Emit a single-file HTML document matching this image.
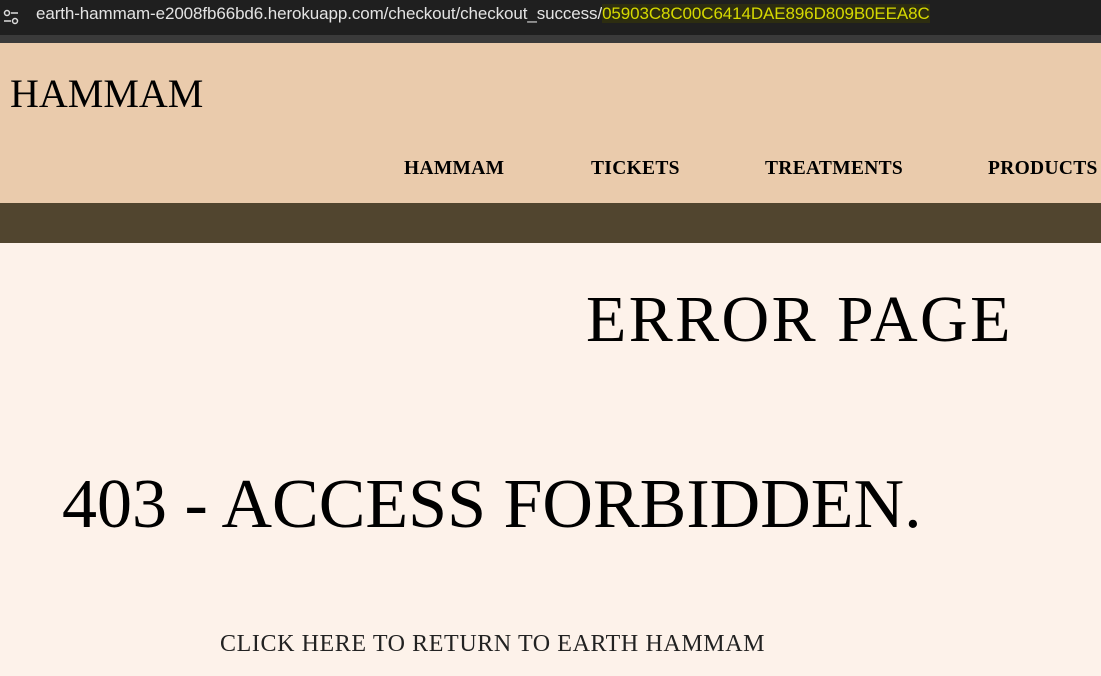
<!DOCTYPE html>
<html><head><style>
body{margin:0;width:1101px;height:676px;overflow:hidden;background:#fdf2ea;font-family:"Liberation Serif",serif;position:relative}
.bar{position:absolute;left:0;top:0;width:1101px;height:35px;background:#1f1f1f}
.bar2{position:absolute;left:0;top:35px;width:1101px;height:8px;background:#3a3a3a}
.url{position:absolute;left:36px;top:4px;font-family:"Liberation Sans",sans-serif;font-size:17px;color:#e3e3e3;white-space:nowrap;letter-spacing:-0.1px}
.url span{color:#d6d900;background:#2d2d10}
.hdr{position:absolute;left:0;top:43px;width:1101px;height:160px;background:#eacbac}
.brown{position:absolute;left:0;top:203px;width:1101px;height:40px;background:#51452f}
.t{position:absolute;white-space:nowrap;color:#000}
</style></head><body>
<div class="bar"></div><div class="bar2"></div>
<svg style="position:absolute;left:2px;top:8px" width="18" height="18"><circle cx="5" cy="5" r="2.5" fill="none" stroke="#ddd" stroke-width="1.5"/><line x1="9" y1="5" x2="16" y2="5" stroke="#ddd" stroke-width="1.5"/><line x1="2" y1="13" x2="9" y2="13" stroke="#ddd" stroke-width="1.5"/><circle cx="13" cy="13" r="2.5" fill="none" stroke="#ddd" stroke-width="1.5"/></svg>
<div class="url">earth-hammam-e2008fb66bd6.herokuapp.com/checkout/checkout_success/<span>05903C8C00C6414DAE896D809B0EEA8C</span></div>
<div class="hdr"></div><div class="brown"></div>
<div class="t" style="left:10px;top:70px;font-size:40px">HAMMAM</div>
<div class="t" style="left:404px;top:158px;font-size:19.5px;font-weight:bold;letter-spacing:0.3px">HAMMAM</div>
<div class="t" style="left:591px;top:158px;font-size:19.5px;font-weight:bold;letter-spacing:0.3px">TICKETS</div>
<div class="t" style="left:765px;top:158px;font-size:19.5px;font-weight:bold;letter-spacing:0.3px">TREATMENTS</div>
<div class="t" style="left:988px;top:158px;font-size:19.5px;font-weight:bold;letter-spacing:0.3px">PRODUCTS</div>
<div class="t" style="left:586px;top:282px;font-size:66px;letter-spacing:2.4px">ERROR PAGE</div>
<div class="t" style="left:62px;top:465px;font-size:70px">403 - ACCESS FORBIDDEN.</div>
<div class="t" style="left:220px;top:631px;font-size:24px;color:#222;letter-spacing:0.6px">CLICK HERE TO RETURN TO EARTH HAMMAM</div>
</body></html>
